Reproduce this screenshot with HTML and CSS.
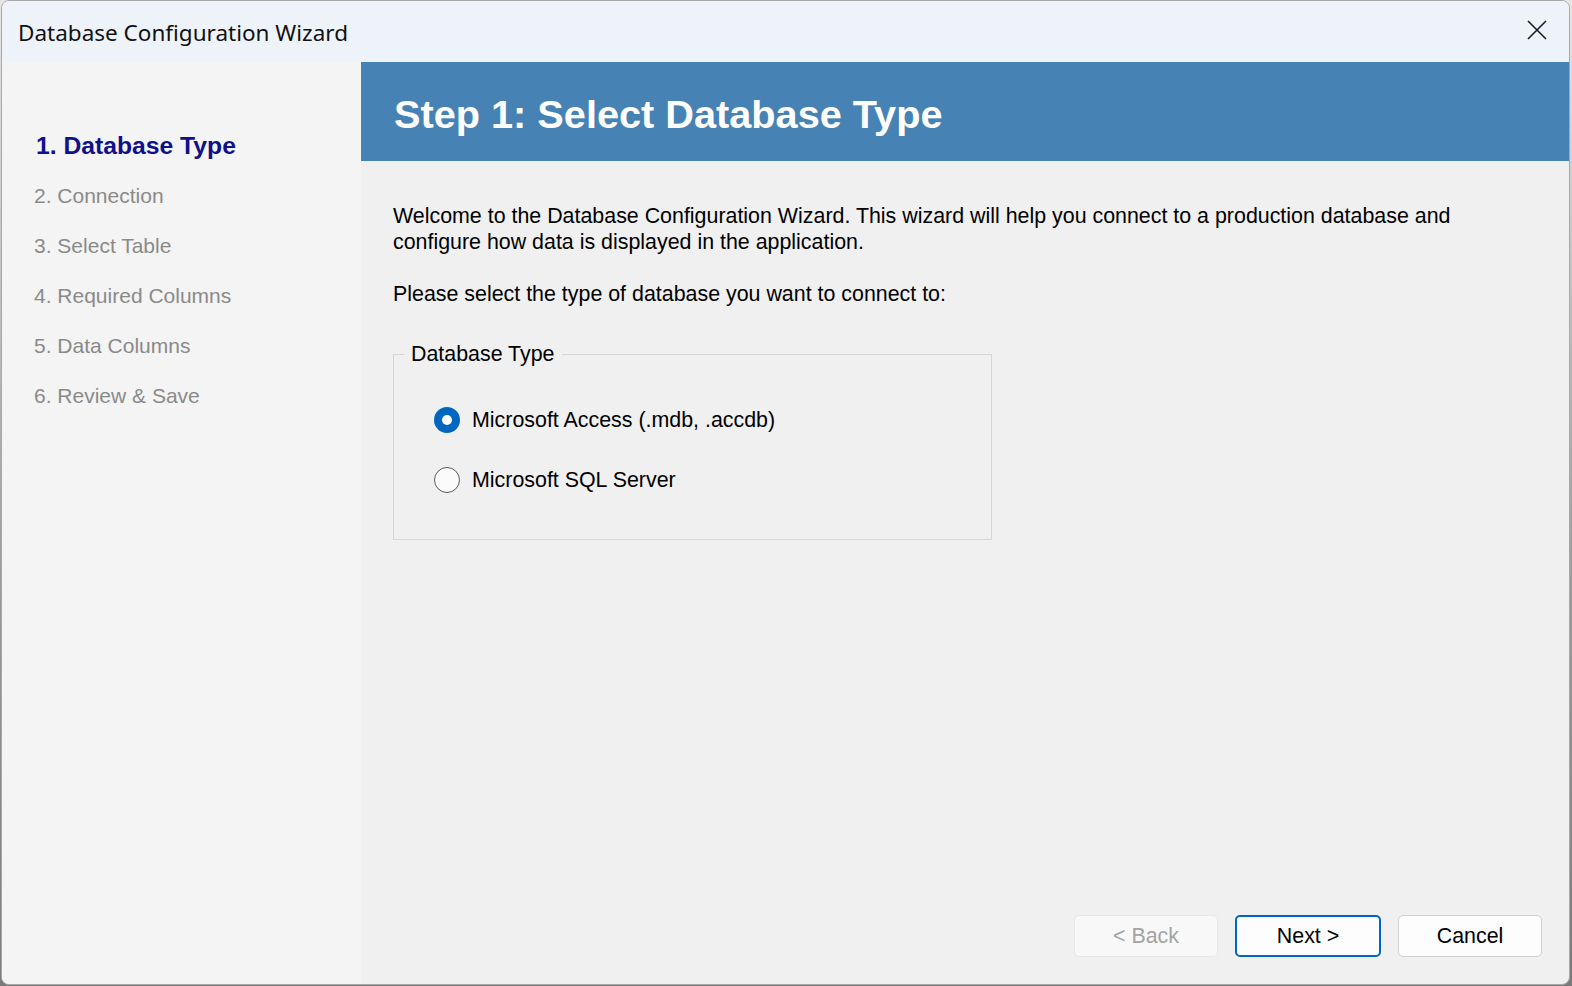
FILE: index.html
```html
<!DOCTYPE html>
<html lang="en">
<head>
  <meta charset="UTF-8" />
  <title>Database Configuration Wizard</title>
  <link rel="stylesheet" href="styles.css">
</head>
<body>
  <div class="window">
    <!-- Barre de titre -->
    <div class="titlebar">
      <span class="title">Database Configuration Wizard</span>
      <button class="close-btn" aria-label="Close">
        <svg width="22" height="22" viewBox="0 0 22 22">
          <path d="M2 2 L20 20 M20 2 L2 20" stroke="#1a1a1a" stroke-width="1.6" fill="none" />
        </svg>
      </button>
    </div>

    <div class="wizard">
      <!-- Étapes -->
      <ul class="steps">
        <li class="active">1. Database Type</li>
        <li>2. Connection</li>
        <li>3. Select Table</li>
        <li>4. Required Columns</li>
        <li>5. Data Columns</li>
        <li>6. Review &amp; Save</li>
      </ul>

      <div class="main">
        <div class="banner">
          <h1>Step 1: Select Database Type</h1>
        </div>

        <div class="content">
          <p class="intro">
            Welcome to the Database Configuration Wizard. This wizard will help you connect to a production database and<br>
            configure how data is displayed in the application.
          </p>
          <p class="prompt">Please select the type of database you want to connect to:</p>

          <fieldset class="db-type">
            <legend>Database Type</legend>
            <div class="options">
              <label class="radio">
                <input type="radio" name="dbtype" checked>
                <span class="mark"></span>
                Microsoft Access (.mdb, .accdb)
              </label>
              <label class="radio">
                <input type="radio" name="dbtype">
                <span class="mark"></span>
                Microsoft SQL Server
              </label>
            </div>
          </fieldset>
        </div>

        <div class="footer">
          <button class="btn" disabled>&lt; Back</button>
          <button class="btn primary">Next &gt;</button>
          <button class="btn">Cancel</button>
        </div>
      </div>
    </div>
  </div>
</body>
</html>
```

FILE: styles.css
```css
/* ===============================
   BASE
   =============================== */
* {
  margin: 0;
  padding: 0;
  box-sizing: border-box;
}
html, body {
  height: 100%;
}
body {
  background: linear-gradient(#e6e6e6 0%, #9a9a9a 60%, #7a7a7a 100%);
  font-family: "Liberation Sans", Arial, sans-serif;
  color: #000;
  overflow: hidden;
}
button {
  font-family: inherit;
  cursor: pointer;
}

/* ===============================
   FENÊTRE
   =============================== */
.window {
  margin-left: 1px;
  width: 1569px;
  height: 985px;
  border: 1px solid #a8a8a8;
  border-radius: 8px;
  overflow: hidden;
  display: grid;
  grid-template-rows: 61px 1fr;
  background: #f0f0f0;
}
.titlebar {
  display: flex;
  align-items: center;
  justify-content: space-between;
  background: #eef3fa;
  padding: 0 14px 0 16px;
}
.title {
  font-family: "Noto Sans", "Open Sans", sans-serif;
  font-size: 22.5px;
  color: #111;
  margin-top: 2px;
}
.close-btn {
  background: transparent;
  border: none;
  width: 36px;
  height: 36px;
  display: grid;
  place-items: center;
  margin-top: -3px;
}

/* ===============================
   ASSISTANT
   =============================== */
.wizard {
  display: grid;
  grid-template-columns: 359px 1fr;
  min-height: 0;
}
.steps {
  list-style: none;
  background: #f4f4f4;
  padding: 59px 0 0 32px;
}
.steps li {
  font-size: 21px;
  line-height: 50px;
  height: 50px;
  color: #8a8a8a;
}
.steps li.active {
  font-weight: bold;
  font-size: 24.7px;
  color: #10108a;
  padding-left: 2px;
}

.main {
  display: flex;
  flex-direction: column;
  min-height: 0;
}
.banner {
  height: 99px;
  background: #4682b4;
  display: flex;
  align-items: center;
  padding: 6px 0 0 33px;
}
.banner h1 {
  font-size: 39.7px;
  font-weight: bold;
  color: #fff;
}

.content {
  flex: 1;
  padding: 42px 0 0 32px;
  font-size: 21.4px;
}
.intro {
  line-height: 26px;
}
.prompt {
  margin-top: 26px;
  line-height: 26px;
}

/* ===============================
   GROUPE DE BOUTONS RADIO
   =============================== */
.db-type {
  margin-top: 34px;
  width: 599px;
  height: 199px;
  border: 1px solid #d6d6d6;
  padding: 0 0 0 10px;
}
.db-type legend {
  padding: 0 7px;
  font-size: 21.4px;
  line-height: 26px;
}
.options {
  padding: 40px 0 0 30px;
  display: flex;
  flex-direction: column;
  gap: 34px;
}
.radio {
  display: flex;
  align-items: center;
  gap: 12px;
  height: 26px;
  font-size: 21.4px;
}
.radio input {
  display: none;
}
.mark {
  width: 26px;
  height: 26px;
  border-radius: 50%;
  border: 1.5px solid #5c5c5c;
  background: #fbfbfb;
  flex-shrink: 0;
  position: relative;
}
.radio input:checked + .mark {
  border: none;
  background: #0067c0;
}
.radio input:checked + .mark::after {
  content: "";
  position: absolute;
  top: 50%;
  left: 50%;
  width: 10px;
  height: 10px;
  border-radius: 50%;
  background: #fff;
  transform: translate(-50%, -50%);
}

/* ===============================
   BOUTONS DU BAS
   =============================== */
.footer {
  display: flex;
  justify-content: flex-end;
  gap: 17px;
  padding: 0 27px 27px 0;
}
.btn {
  width: 144px;
  height: 42px;
  border-radius: 5px;
  border: 1px solid #d0d0d0;
  background: #fdfdfd;
  font-size: 21.4px;
  color: #000;
}
.btn.primary {
  width: 146px;
  border: 2px solid #0067c0;
  background: #fdfdfd;
}
.btn:disabled {
  background: #f8f8f8;
  border-color: #e8e8e8;
  color: #a3a3a3;
  cursor: default;
}
```
